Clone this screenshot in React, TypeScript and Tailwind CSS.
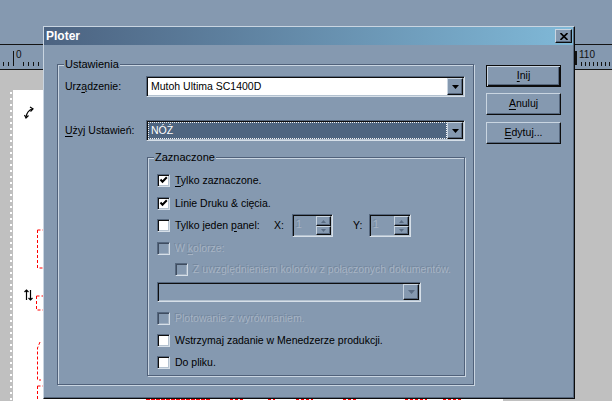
import React from 'react';

const sunken =
  'border border-t-[#55677e] border-l-[#55677e] border-b-[#d6dfe8] border-r-[#d6dfe8] shadow-[inset_1px_1px_0_#0e0e0e,inset_-1px_-1px_0_#b4c2d0]';
const raised =
  'border border-t-[#c9d5e1] border-l-[#c9d5e1] border-b-[#0c0c0c] border-r-[#0c0c0c] shadow-[inset_-1px_-1px_0_#56677d]';
const etched = 'border border-[#50617a] shadow-[1px_1px_0_#c9d5e1,inset_1px_1px_0_#c9d5e1]';
const dimText = 'text-[#a7b4c4] [text-shadow:-1px_-1px_0_#74879d]';

const U = ({ children }: { children: React.ReactNode }) => (
    <span className="underline decoration-1 underline-offset-[2px]">{children}</span>
);

function Ruler() {
    const leftTicks = [3, 8, 23, 28, 33, 38];
    const rightTicks = [581, 585, 589, 593, 597, 601, 605, 609];
    return (
        <div className="h-[26px] border-y border-[#141414] bg-[#8599b0]">
            <svg width="612" height="24" className="block">
                {leftTicks.map(x => (
                    <line key={x} x1={x + 0.5} x2={x + 0.5} y1={17} y2={21} stroke="#111" />
                ))}
                <line x1={13.5} x2={13.5} y1={6} y2={21} stroke="#111" />
                <text x={16} y={13} fontSize={10} fontFamily="Liberation Sans, Arial, sans-serif" fill="#111">0</text>
                <rect x={575} y={6} width={2} height={14} fill="#111" />
                <text x={579} y={13} fontSize={10} fontFamily="Liberation Sans, Arial, sans-serif" fill="#111">110</text>
                {rightTicks.map(x => (
                    <line key={x} x1={x + 0.5} x2={x + 0.5} y1={17} y2={21} stroke="#111" />
                ))}
            </svg>
        </div>
    );
}

function Checkbox({ checked, disabled }: { checked?: boolean; disabled?: boolean }) {
    return (
        <span
            className={`relative flex items-center justify-center w-[13px] h-[13px] shrink-0 border border-t-[#55677e] border-l-[#55677e] border-b-[#d6dfe8] border-r-[#d6dfe8] ${
                disabled
                    ? 'bg-[#8599b0] shadow-[inset_1px_1px_0_#3f4d60,inset_-1px_-1px_0_#a2b1c2]'
                    : 'bg-white shadow-[inset_1px_1px_0_#0e0e0e,inset_-1px_-1px_0_#b4c2d0]'
            }`}
        >
            {checked && (
                <svg width="9" height="9" viewBox="0 0 9 9" className="block">
                    <path d="M1.5 3.5 L3.5 5.8 L7.8 1.3" fill="none" stroke="#000" strokeWidth="2" />
                </svg>
            )}
        </span>
    );
}

function DropButton({ disabled }: { disabled?: boolean }) {
    return (
        <div className={`w-[16px] h-full shrink-0 bg-[#8599b0] flex items-center justify-center ${raised}`}>
            <svg width="7" height="4" viewBox="0 0 7 4" className="block">
                <polygon points="0,0 7,0 3.5,4" fill={disabled ? '#5a6c83' : '#000'} />
            </svg>
        </div>
    );
}

function SpinButton({ up, h }: { up?: boolean; h: string }) {
    return (
        <div className={`w-[15px] ${h} bg-[#8599b0] flex items-center justify-center ${raised}`}>
            <svg width="5" height="3" viewBox="0 0 5 3" className="block">
                <polygon points={up ? '2.5,0 5,3 0,3' : '0,0 5,0 2.5,3'} fill="#5a6c83" />
            </svg>
        </div>
    );
}

function Spin({ w }: { w: string }) {
    return (
        <div className={`${w} h-[23px] flex p-[1px] bg-[#8599b0] ${sunken}`}>
            <span className={`flex-1 pl-[2px] leading-[17px] ${dimText}`}>1</span>
            <div className="flex flex-col">
                <SpinButton up h="h-[10px]" />
                <SpinButton h="h-[9px]" />
            </div>
        </div>
    );
}

function Row({
    checked, disabled, className = '', children,
}: { checked?: boolean; disabled?: boolean; className?: string; children: React.ReactNode }) {
    return (
        <div className={`flex items-center h-[13px] ${className}`}>
            <Checkbox checked={checked} disabled={disabled} />
            <span className={`ml-[5px] whitespace-nowrap leading-[13px] ${disabled ? dimText : 'text-black'}`}>{children}</span>
        </div>
    );
}

function DlgButton({ children, isDefault, className = '' }: { children: React.ReactNode; isDefault?: boolean; className?: string }) {
    return (
        <div
            className={`w-[75px] h-[22px] flex items-center justify-center bg-[#8599b0] text-black ${
                isDefault
                    ? 'border border-[#0c0c0c] shadow-[inset_1px_1px_0_#c9d5e1,inset_-1px_-1px_0_#0c0c0c,inset_-2px_-2px_0_#56677d]'
                    : raised
            } ${className}`}
        >
            {children}
        </div>
    );
}

function PageMarks() {
    return (
        <svg width="490" height="311" className="absolute left-0 top-0">
            <g fill="none" stroke="#ff0000" strokeWidth="1" strokeDasharray="3 2">
                <path d="M24.5 140 H31 M24.5 140 V178 H31" />
                <path d="M23.5 206 H30 M23.5 206 V220 H30" />
                <path d="M27 252 L24.5 258 V290 H28" />
                <path d="M24.5 296 H31 M24.5 296 V311" />
                <path d="M133 309.5 H197" strokeDasharray="4 1" />
                <path d="M217 309.5 H232 M255 309.5 H262 M283 309.5 H300 M330 309.5 H345 M392 309.5 H414 M430 309.5 H450" />
            </g>
            <g fill="none" stroke="#000" strokeWidth="1.2">
                <path d="M13 27 Q14 21 19 19" />
                <path d="M17 17 L20 18.8 L17.5 21.5" />
                <path d="M11.5 25 L13 28 L15.5 25.5" />
                <path d="M13.5 200 V210 M11.5 202 L13.5 200 L15.5 202" />
                <path d="M17.5 200 V210 M15.5 208 L17.5 210 L19.5 208" />
            </g>
        </svg>
    );
}

export default function App() {
    return (
        <div className="relative w-[612px] h-[401px] overflow-hidden bg-[#8599b0] font-['Liberation_Sans',Arial,sans-serif] text-[10.5px] select-none">
            {/* application behind the dialog */}
            <div className="h-[44px]" />
            <Ruler />
            <div className="flex h-[331px] bg-[#c0c0c0]">
                <div className="w-[13px] shrink-0 flex flex-col">
                    <div className="mt-[22px] ml-[10px] w-[2px] flex-1 bg-[repeating-linear-gradient(to_bottom,#ffffff_0px,#ffffff_2px,transparent_2px,transparent_6px)]" />
                </div>
                <div className="relative mt-[20px] w-[490px] bg-white">
                    <PageMarks />
                </div>
            </div>

            {/* Ploter dialog */}
            <div className="absolute left-[43px] top-[26px] w-[532px] h-[373px] flex flex-col bg-[#8599b0] border border-t-[#c9d5e1] border-l-[#c9d5e1] border-r-[#0c0c0c] border-b-[#0c0c0c] shadow-[inset_-1px_-1px_0_#56677d]">
                <div className="h-[18px] mr-[1px] flex items-center bg-linear-to-r from-[#4c6381] to-[#80b9d8]">
                    <span className="ml-[2px] text-white font-bold text-[12px] leading-none">Ploter</span>
                    <div className={`ml-auto mr-[1px] w-[17px] h-[14px] flex items-center justify-center bg-[#8599b0] ${raised}`}>
                        <svg width="8" height="7" viewBox="0 0 8 7" className="block">
                            <path d="M0.5 0 L7.5 7 M7.5 0 L0.5 7" stroke="#000" strokeWidth="1.6" />
                        </svg>
                    </div>
                </div>

                <div className="flex pl-[13px] pt-[19px]">
                    {/* Ustawienia */}
                    <div className={`relative w-[417px] h-[321px] ${etched}`}>
                        <span className="absolute left-[6px] -top-[8px] px-[1px] bg-[#8599b0] text-[11px] leading-[14px] text-black">Ustawienia</span>
                        <div className="pt-[11px] pl-[7px]">
                            <div className="flex items-center">
                                <span className="w-[81px] text-black">Urz<U>ą</U>dzenie:</span>
                                <div className={`w-[319px] h-[21px] flex p-[1px] bg-white ${sunken}`}>
                                    <span className="flex-1 pl-[3px] leading-[17px] text-black">Mutoh Ultima SC1400D</span>
                                    <DropButton />
                                </div>
                            </div>
                            <div className="flex items-center mt-[23px]">
                                <span className="w-[81px] text-black"><U>U</U>żyj Ustawień:</span>
                                <div className={`w-[319px] h-[21px] flex p-[1px] bg-white ${sunken}`}>
                                    <div className="flex-1 bg-[#4e6580] border border-dotted border-[#f4f4f4] pl-[2px] leading-[15px] text-white">NÓŻ</div>
                                    <DropButton />
                                </div>
                            </div>

                            {/* Zaznaczone */}
                            <div className={`relative ml-[82px] mt-[16px] w-[318px] h-[219px] ${etched}`}>
                                <span className="absolute left-[6px] -top-[8px] px-[1px] bg-[#8599b0] text-[11px] leading-[14px] text-black">Zaznaczone</span>
                                <div className="pl-[9px] pt-[16px]">
                                    <Row checked><U>T</U>ylko zaznaczone.</Row>
                                    <Row checked className="mt-[10px]">Linie Druku &amp; cięcia.</Row>
                                    <div className="flex items-center h-[13px] mt-[9px]">
                                        <Checkbox />
                                        <span className="ml-[5px] w-[99px] whitespace-nowrap text-black">Tylko jeden <U>p</U>anel:</span>
                                        <span className="w-[18px] text-black">X:</span>
                                        <Spin w="w-[41px]" />
                                        <span className="ml-[20px] w-[16px] text-black">Y:</span>
                                        <Spin w="w-[42px]" />
                                    </div>
                                    <Row disabled className="mt-[10px]">W <U>k</U>olorze:</Row>
                                    <Row disabled className="mt-[8px] ml-[18px]">Z uwzględnieniem kolorów z połączonych dokumentów.</Row>
                                    <div className={`mt-[6px] w-[264px] h-[20px] flex p-[1px] bg-[#8599b0] ${sunken}`}>
                                        <div className="flex-1" />
                                        <DropButton disabled />
                                    </div>
                                    <Row disabled className="mt-[10px]">Plotowanie z wyrównaniem.</Row>
                                    <Row className="mt-[9px]">Wstrzymaj zadanie w Menedzerze produkcji.</Row>
                                    <Row className="mt-[9px]">Do pliku.</Row>
                                </div>
                            </div>
                        </div>
                    </div>

                    {/* buttons */}
                    <div className="ml-[12px] pt-[1px] flex flex-col">
                        <DlgButton isDefault><U>I</U>nij</DlgButton>
                        <DlgButton className="mt-[6px]"><U>A</U>nuluj</DlgButton>
                        <DlgButton className="mt-[7px]"><U>E</U>dytuj...</DlgButton>
                    </div>
                </div>
            </div>
        </div>
    );
}
